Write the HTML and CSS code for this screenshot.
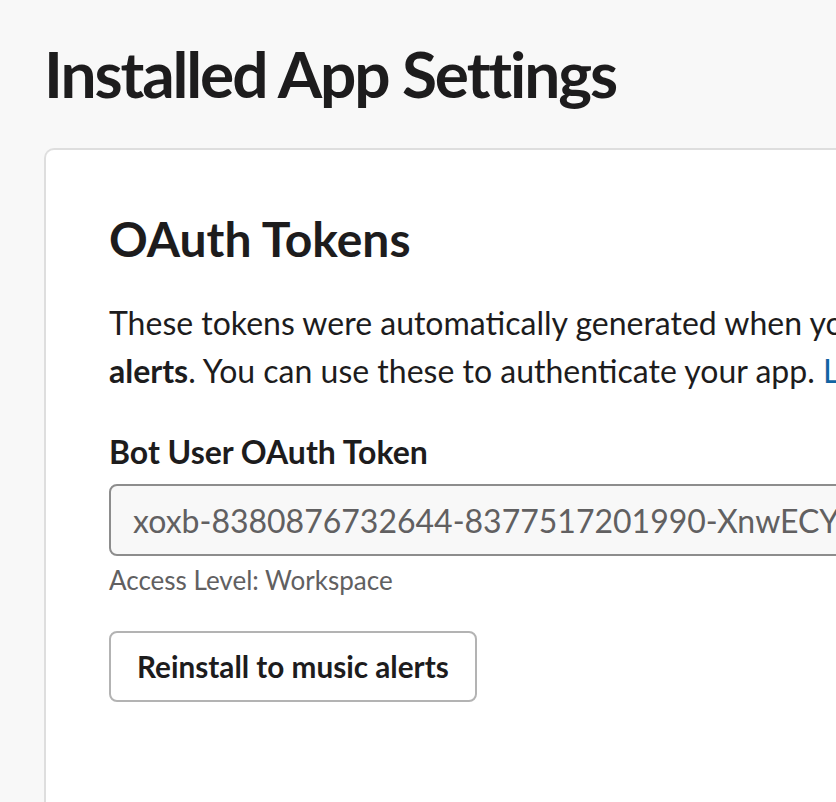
FILE: index.html
```html
<!DOCTYPE html>
<html lang="en">
<head>
<meta charset="utf-8">
<title>Installed App Settings</title>
<link rel="stylesheet" href="styles.css">
</head>
<body>
<main class="page">
  <h1 class="page-title">Installed App Settings</h1>
  <section class="card">
    <h2 class="card-title">OAuth Tokens</h2>
    <p class="card-desc">These tokens were automatically generated when you installed the app to <b>music alerts</b>. You can use these to authenticate your app. <a class="link" href="#">Learn more.</a></p>
    <label class="field-label" for="bot-token">Bot User OAuth Token</label>
    <div class="field-row">
      <input id="bot-token" class="token-input" type="text" readonly value="xoxb-8380876732644-8377517201990-XnwECYqQ8iVf0pTrLm3sHdKa">
    </div>
    <div class="field-hint">Access Level: Workspace</div>
    <button class="btn" type="button">Reinstall to music alerts</button>
  </section>
</main>
</body>
</html>
```

FILE: styles.css
```css
html, body {
  margin: 0;
  padding: 0;
  background: #f8f8f8;
  overflow: hidden;
}
body {
  font-family: Lato, "Noto Sans", sans-serif;
  color: #1d1c1d;
}
.page {
  padding: 35px 0 0 44px;
}
.page-title {
  margin: 0;
  font-size: 64px;
  line-height: 77px;
  font-weight: 700;
  letter-spacing: -2.1px;
}
.card {
  margin-top: 36px;
  background: #fff;
  border: 2px solid #dedede;
  border-right: none;
  border-bottom: none;
  border-radius: 10px 0 0 0;
  padding: 60px 0 200px 63px;
  white-space: nowrap;
  overflow: hidden;
}
.card-title {
  margin: 0;
  font-size: 48px;
  line-height: 58px;
  font-weight: 700;
}
.card-desc {
  margin: 31px 0 0 0;
  font-size: 32px;
  line-height: 48px;
  white-space: normal;
  width: 1180px;
}
.card-desc b { font-weight: 700; }
.link { color: #1264a3; text-decoration: none; }
.field-label {
  display: block;
  margin-top: 37px;
  font-size: 32px;
  line-height: 40px;
  font-weight: 700;
}
.field-row {
  margin-top: 12px;
}
.token-input {
  display: block;
  box-sizing: border-box;
  width: 1100px;
  height: 72px;
  padding: 0 22px;
  border: 2px solid #8d8d8d;
  border-radius: 8px;
  background: #f8f8f8;
  color: #616061;
  font-family: Lato, "Noto Sans", sans-serif;
  font-size: 32px;
  outline: none;
}
.field-hint {
  margin-top: 8px;
  font-size: 26px;
  line-height: 32px;
  color: #616061;
}
.btn {
  display: block;
  margin-top: 35px;
  box-sizing: border-box;
  height: 71px;
  padding: 0 26px;
  border: 2px solid #b3b3b3;
  border-radius: 8px;
  background: #fff;
  color: #1d1c1d;
  font-family: Lato, "Noto Sans", sans-serif;
  font-size: 29.7px;
  font-weight: 700;
}
```
